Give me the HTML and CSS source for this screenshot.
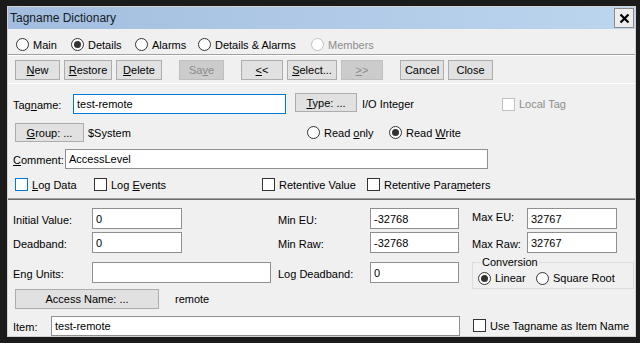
FILE: index.html
```html
<!DOCTYPE html>
<html lang="en">

<head>
    <meta charset="UTF-8">
    <title>Tagname Dictionary</title>
    <link rel="stylesheet" href="styles.css">
</head>

<body>
    <div class="window">
        <div class="titlebar">
            <span class="title">Tagname Dictionary</span>
            <button class="close-btn">
                <svg width="11" height="11" viewBox="0 0 11 11"><path d="M1.5 1.5 L9.5 9.5 M9.5 1.5 L1.5 9.5" stroke="#000" stroke-width="2.2" fill="none"/></svg>
            </button>
        </div>

        <div class="tabs">
            <div class="opt w-main"><span class="radio"></span><span>Main</span></div>
            <div class="opt w-details"><span class="radio on"></span><span>Details</span></div>
            <div class="opt w-alarms"><span class="radio"></span><span>Alarms</span></div>
            <div class="opt w-both"><span class="radio"></span><span>Details &amp; Alarms</span></div>
            <div class="opt disabled"><span class="radio"></span><span>Members</span></div>
        </div>

        <div class="toolbar">
            <div class="group">
                <button class="btn b45"><span><u>N</u>ew</span></button>
                <button class="btn b48"><span><u>R</u>estore</span></button>
                <button class="btn b46"><span><u>D</u>elete</span></button>
            </div>
            <div class="group">
                <button class="btn b45 off"><span>Sa<u>v</u>e</span></button>
            </div>
            <div class="group">
                <button class="btn b42"><span><u>&lt;</u>&lt;</span></button>
                <button class="btn b50"><span><u>S</u>elect...</span></button>
                <button class="btn b42 off"><span><u>&gt;</u>&gt;</span></button>
            </div>
            <div class="group">
                <button class="btn b44">Cancel</button>
                <button class="btn b45">Close</button>
            </div>
        </div>

        <div class="upper">
            <div class="row h22">
                <span class="lbl w60">Tag<u>n</u>ame:</span>
                <input class="field focus w213" value="test-remote">
                <button class="btn small type-btn"><span><u>T</u>ype: ...</span></button>
                <span class="value io-type">I/O Integer</span>
                <div class="opt disabled"><span class="check"></span><span>Local Tag</span></div>
            </div>
            <div class="row h23 mt6">
                <button class="btn small group-btn"><span><u>G</u>roup: ...</span></button>
                <span class="value system">$System</span>
                <div class="opt w-readonly"><span class="radio"></span><span>Read <u>o</u>nly</span></div>
                <div class="opt"><span class="radio on"></span><span>Read <u>W</u>rite</span></div>
            </div>
            <div class="row h22 mt4">
                <span class="lbl w52"><u>C</u>omment:</span>
                <input class="field w423" value="AccessLevel">
            </div>
            <div class="row h21 mt4 checks">
                <div class="opt w-logdata"><span class="check hover"></span><span><u>L</u>og Data</span></div>
                <div class="opt w-logevents"><span class="check"></span><span>Log <u>E</u>vents</span></div>
                <div class="opt w-retval"><span class="check"></span><span>Retentive Value</span></div>
                <div class="opt"><span class="check"></span><span>Retentive Para<u>m</u>eters</span></div>
            </div>
        </div>

        <div class="lower">
            <div class="row h23">
                <span class="lbl w79">Initial Value:</span>
                <input class="field w90" value="0">
                <span class="lbl w92 ml96">Min EU:</span>
                <input class="field w89" value="-32768">
                <span class="lbl w55 ml13 raised">Max EU:</span>
                <input class="field w90" value="32767">
            </div>
            <div class="row h23 mt1">
                <span class="lbl w79">Deadband:</span>
                <input class="field w90" value="0">
                <span class="lbl w92 ml96">Min Raw:</span>
                <input class="field w89" value="-32768">
                <span class="lbl w55 ml13">Max Raw:</span>
                <input class="field w90" value="32767">
            </div>
            <div class="pair">
                <div class="leftcol">
                    <div class="row h23">
                        <span class="lbl w79">Eng Units:</span>
                        <input class="field w179" value="">
                        <span class="lbl w92 ml7">Log Deadband:</span>
                        <input class="field w89" value="0">
                    </div>
                    <div class="row h23 mt3">
                        <button class="btn access-btn">Access Name: ...</button>
                        <span class="value remote">remote</span>
                    </div>
                </div>
                <fieldset class="conversion">
                    <legend>Conversion</legend>
                    <div class="opt w-linear"><span class="radio on"></span><span>Linear</span></div>
                    <div class="opt"><span class="radio"></span><span>Square Root</span></div>
                </fieldset>
            </div>
            <div class="row h21 mt5">
                <span class="lbl w38">Item:</span>
                <input class="field w409" value="test-remote">
                <div class="opt use-tag"><span class="check"></span><span>Use Tagname as Item Name</span></div>
            </div>
        </div>
    </div>
</body>

</html>
```

FILE: styles.css
```css
* {
    box-sizing: border-box;
}

body {
    margin: 0;
    padding: 6px 4px 0 7px;
    height: 343px;
    overflow: hidden;
    background: #1b1b1b;
    font-family: 'Liberation Sans', Arial, sans-serif;
    font-size: 11px;
    color: #000;
}

.window {
    width: 629px;
    background: #f0f0f0;
    border: 1px solid #d2d2d2;
}

.titlebar {
    height: 22px;
    display: flex;
    align-items: center;
    justify-content: space-between;
    padding-left: 2px;
    background: linear-gradient(to right, #a2bddf, #bdd5ee);
}

.title {
    font-size: 12px;
    color: #161b22;
}

.close-btn {
    width: 20px;
    height: 20px;
    margin-right: 1px;
    padding: 0;
    border: 1px solid #8c8c8c;
    background: #ededed;
    display: flex;
    align-items: center;
    justify-content: center;
}

/* radio + checkbox look */
.opt {
    display: flex;
    align-items: center;
    white-space: nowrap;
}

.radio,
.check {
    flex: none;
    width: 13px;
    height: 13px;
    margin-right: 4px;
    border: 1px solid #333;
    background: #fff;
    display: flex;
    align-items: center;
    justify-content: center;
}

.radio {
    border-radius: 50%;
}

.radio.on::after {
    content: "";
    width: 7px;
    height: 7px;
    border-radius: 50%;
    background: #333;
}

.check.hover {
    border-color: #0078d7;
}

.opt.disabled {
    color: #8d8d8d;
}

.opt.disabled .radio,
.opt.disabled .check {
    border-color: #c2c2c2;
}

.tabs {
    height: 26px;
    padding: 6px 0 0 8px;
    display: flex;
    align-items: center;
    border-bottom: 1px solid #a0a0a0;
}

.w-main { width: 55px; }
.w-details { width: 64px; }
.w-alarms { width: 63px; }
.w-both { width: 113px; }

.toolbar {
    display: flex;
    gap: 17px;
    padding: 4px 0 3px 7px;
    border-top: 1px solid #fff;
    border-bottom: 1px solid #fff;
}

.group {
    display: flex;
    gap: 4px;
}

.btn {
    height: 20px;
    padding: 0;
    border: 1px solid #adadad;
    background: #e1e1e1;
    font-family: inherit;
    font-size: 11px;
    color: #000;
    display: flex;
    align-items: center;
    justify-content: center;
    white-space: nowrap;
}

.btn.off {
    background: #cccccc;
    border-color: #bfbfbf;
    color: #8a8a8a;
}

.btn.small {
    height: 19px;
}

.b42 { width: 42px; }
.b44 { width: 44px; }
.b45 { width: 45px; }
.b46 { width: 46px; }
.b48 { width: 48px; }
.b50 { width: 50px; }

.upper {
    padding: 9px 0 3px 5px;
}

.row {
    display: flex;
    align-items: center;
}

.h21 { height: 21px; }
.h22 { height: 22px; }
.h23 { height: 23px; }
.mt1 { margin-top: 1px; }
.mt3 { margin-top: 3px; }
.mt4 { margin-top: 4px; }
.mt5 { margin-top: 5px; }
.mt6 { margin-top: 6px; }
.ml7 { margin-left: 7px; }
.ml13 { margin-left: 13px; }
.ml96 { margin-left: 96px; }

.lbl {
    flex: none;
    padding-top: 2px;
}

.lbl.raised {
    padding-top: 0;
    margin-top: -4px;
}

.w38 { width: 38px; }
.w52 { width: 52px; }
.w55 { width: 55px; }
.w60 { width: 60px; }
.w79 { width: 79px; }
.w89 { width: 89px; }
.w90 { width: 90px; }
.w92 { width: 92px; }
.w179 { width: 179px; }
.w213 { width: 213px; }
.w409 { width: 409px; }
.w423 { width: 423px; }

.field {
    flex: none;
    height: 21px;
    padding: 0 3px;
    border: 1px solid #8f8f8f;
    background: #fff;
    font-family: inherit;
    font-size: 11px;
    color: #000;
    outline: none;
}

.h22 .field,
.h21 .field {
    height: 20px;
}

.field.focus {
    border-color: #0078d7;
}

.type-btn {
    width: 62px;
    margin-left: 9px;
    margin-top: -3px;
}

.io-type {
    width: 140px;
    margin-left: 5px;
}

.group-btn {
    width: 69px;
    margin-left: 2px;
}

.system {
    width: 219px;
    margin-left: 4px;
}

.w-readonly { width: 82px; }

.checks {
    padding-left: 2px;
}

.w-logdata { width: 79px; }
.w-logevents { width: 168px; }
.w-retval { width: 105px; }

.lower {
    border-top: 1px solid #a0a0a0;
    box-shadow: inset 0 1px 0 #6d6d6d;
    padding: 8px 0 0 5px;
}

.pair {
    display: flex;
    margin-top: 7px;
}

.leftcol {
    width: 459px;
}

.access-btn {
    width: 144px;
    margin-left: 2px;
}

.remote {
    margin-left: 16px;
}

.conversion {
    width: 162px;
    height: 33px;
    margin: -5px 0 0 0;
    padding: 0 0 0 5px;
    border: 1px solid #dcdcdc;
    display: flex;
    align-items: center;
}

.conversion legend {
    margin-left: 3px;
    padding: 0 1px;
    line-height: 12px;
}

.w-linear { width: 58px; }

.use-tag {
    margin-left: 13px;
}
```
